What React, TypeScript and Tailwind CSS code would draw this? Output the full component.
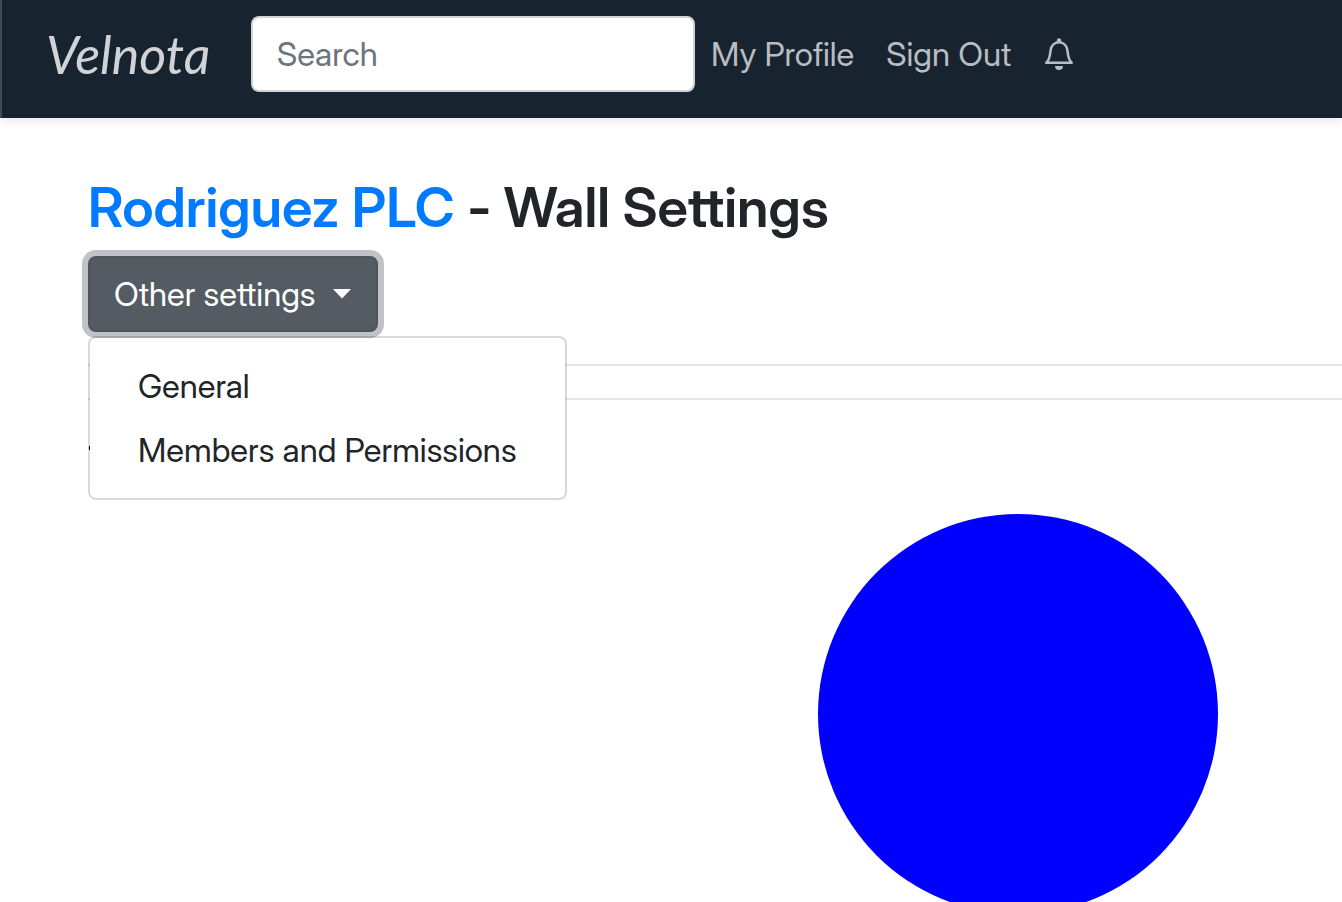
const menuItems = ["General", "Members and Permissions"];

function BellIcon() {
  return (
    <svg viewBox="0 0 32 32" className="size-8" fill="none" aria-hidden="true">
      <path
        d="M3.300 24.800h25.400c-2.700-2.300-3.700-6.500-4.200-11.800C24 7.500 20.500 4.300 16 4.300S8 7.500 7.500 13c-.500 5.300-1.500 9.500-4.200 11.800z"
        stroke="currentColor"
        strokeWidth="2.600"
        strokeLinejoin="round"
      />
      <path d="M13.800 4v-1.500a2.200 2.200 0 0 1 4.400 0V4zM12 28h8a4 4 0 0 1-8 0z" fill="currentColor" />
    </svg>
  );
}

function Header() {
  return (
    <header className="flex items-start border-l-2 border-[#414c57] bg-[#172430] pt-4 pb-[26px] pl-11 leading-[48px] text-[#b9bdc1] shadow-[0_4px_8px_rgba(0,0,0,0.08)]">
      <a
        href="#home"
        className="w-[205px] shrink-0 pt-[14px] font-['Lato',cursive] text-[52px] leading-[48px] text-[#d1d3d6] italic"
      >
        Velnota
      </a>
      <input
        type="search"
        aria-label="Search"
        placeholder="Search"
        className="h-[76px] w-[444px] shrink-0 rounded-lg border-2 border-[#ced4da] bg-white px-6 text-[#495057] placeholder:text-[#6c757d]"
      />
      <nav className="flex items-center gap-8 pt-[14px] pl-4 whitespace-nowrap">
        <a href="#profile">My Profile</a>
        <a href="#sign-out">Sign Out</a>
        <a href="#notifications" aria-label="Notifications">
          <BellIcon />
        </a>
      </nav>
    </header>
  );
}

function SettingsMenu() {
  return (
    <div className="relative w-fit">
      <button
        type="button"
        aria-expanded="true"
        className="flex h-[76px] items-center gap-4 rounded-lg border-2 border-[#4e555b] bg-[#545b62] px-6 text-white shadow-[0_0_0_6px_#bfc3c8]"
      >
        Other settings
        <svg viewBox="0 0 20 10" className="h-[10px] w-5" fill="currentColor" aria-hidden="true">
          <path d="M1 0h18l-9 9.500z" />
        </svg>
      </button>
      <ul className="absolute top-full left-0 z-10 mt-1 rounded-lg border-2 border-black/15 bg-white bg-clip-padding py-4 whitespace-nowrap">
        {menuItems.map((item) => (
          <li key={item}>
            <a href="#settings" className="block px-12 py-2">
              {item}
            </a>
          </li>
        ))}
      </ul>
    </div>
  );
}

export default function App() {
  return (
    <div className="min-h-screen overflow-hidden bg-white font-['Inter_Display','Inter',sans-serif] text-[33px] leading-[48px] text-[#212529] [font-variant-ligatures:none]">
      <Header />
      <main className="pt-14 pl-22">
        <h1 className="mb-4 text-[55px] leading-[66px] font-semibold">
          <a href="#wall" className="text-[#007bff]">
            Rodriguez PLC
          </a>{" "}
          - Wall Settings
        </h1>
        <SettingsMenu />
        <hr className="mt-8 border-t-2 border-black/10" />
        <hr className="mt-8 border-t-2 border-black/10" />
        <div className="mt-[46px] ml-px h-1 w-px bg-black" />
        <div className="mt-16 flex justify-end pr-[124px]">
          <div className="size-[400px] rounded-full bg-[#0000ff]" />
        </div>
      </main>
    </div>
  );
}
